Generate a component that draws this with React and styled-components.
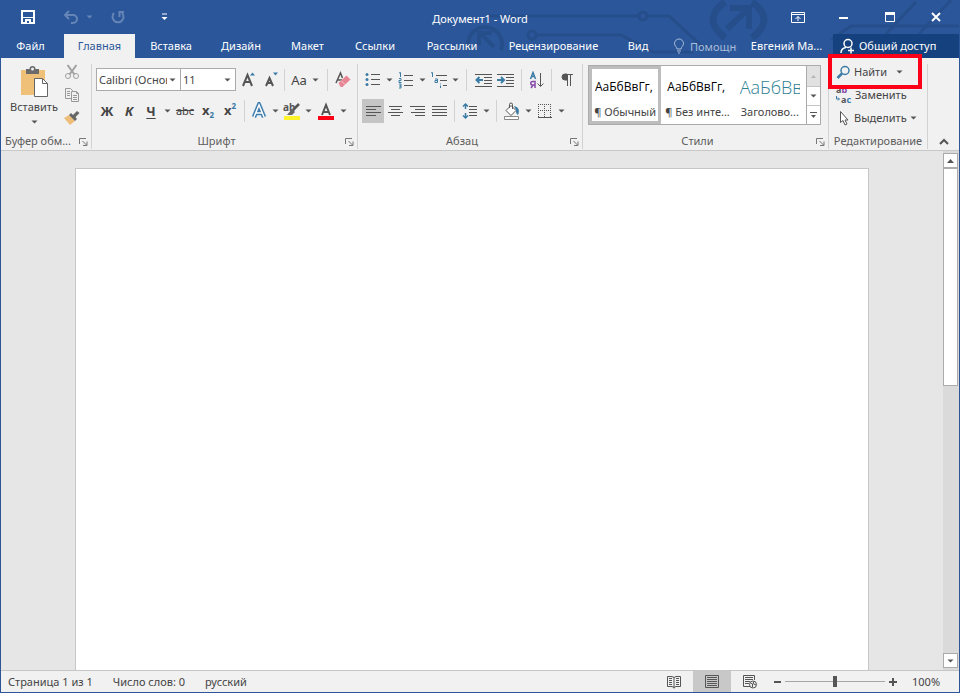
import React from "react";
import styled, { createGlobalStyle } from "styled-components";

const ink = "#444444";
const blue = "#2b579a";
const line = "#c8c8c8";
const accent = "#3a7ca5";
const font = '"Noto Sans", "Open Sans", sans-serif';

const GlobalStyle = createGlobalStyle`
  *, *::before, *::after { box-sizing: border-box; }
  body { margin: 0; font: 11px/16px ${font}; color: ${ink}; }
  button, input, select, textarea { font: inherit; color: inherit; margin: 0; }
  button { background: none; border: 0; padding: 0; cursor: default; white-space: nowrap; }
  svg { display: block; flex: none; }
`;

const Window = styled.div`
  min-height: 100vh;
  display: flex;
  flex-direction: column;
  border: 1px solid ${blue};
  border-top: 0;
  background: #e6e6e6;
`;

/* ---------- header ---------- */
const Header = styled.header`
  position: relative;
  background: ${blue};
  color: #fff;
`;
const Circuit = styled.svg`
  position: absolute;
  top: 0;
  right: 0;
  fill: none;
  stroke: #254e8b;
  stroke-width: 3;
`;
const TitleBar = styled.div`
  position: relative;
  display: grid;
  grid-template-columns: 1fr auto 1fr;
  height: 34px;
  align-items: center;
`;
const QuickAccess = styled.div`
  display: flex;
  align-items: center;
  padding-left: 16px;
`;
const QuickButton = styled.button`
  width: ${(p) => p.$w || 22}px;
  height: 30px;
  display: grid;
  place-items: center;
  margin-right: ${(p) => p.$after || 0}px;
`;
const Title = styled.h1`
  margin: 0;
  padding-top: 4px;
  font-size: 11px;
  line-height: 16px;
  font-weight: 400;
`;
const WindowButtons = styled.div`
  display: flex;
  justify-content: flex-end;
`;
const WindowButton = styled.button`
  width: 46px;
  height: 32px;
  display: grid;
  place-items: center;
`;
const TabBar = styled.nav`
  position: relative;
  display: flex;
  height: 24px;
`;
const Tab = styled.button`
  width: ${(p) => p.$w}px;
  margin-right: ${(p) => p.$after || 0}px;
  text-align: center;
  background: ${(p) => (p.$active ? "#f1f1f1" : "none")};
  color: ${(p) => (p.$active ? blue : "#fff")};
`;
const TellMe = styled.label`
  display: flex;
  align-items: center;
  gap: 5px;
  width: 64px;
  margin-left: 10px;
  color: #a9bcd9;
`;
const TellMeInput = styled.input`
  flex: 1;
  min-width: 0;
  height: 20px;
  padding: 0;
  border: 0;
  background: none;
  &::placeholder { color: #a9bcd9; opacity: 1; }
`;
const Account = styled.button`
  width: 77px;
  margin: 0 8px 0 auto;
  overflow: hidden;
`;
const Share = styled.button`
  width: 126px;
  display: flex;
  align-items: center;
  gap: 4px;
  padding-left: 7px;
  background: #15417e;
`;

/* ---------- ribbon ---------- */
const Ribbon = styled.div`
  display: flex;
  height: 93px;
  padding: 6px 0 1px;
  background: #f1f1f1;
  border-bottom: 1px solid ${line};
`;
const Group = styled.section`
  width: ${(p) => p.$w}px;
  flex: ${(p) => (p.$grow ? "1 0 auto" : "none")};
  display: flex;
  flex-direction: column;
  justify-content: space-between;
  border-right: 1px solid #d2d2d2;
`;
const GroupBody = styled.div`
  padding: ${(p) => p.$pad || "0 0 0 4px"};
`;
const GroupFoot = styled.div`
  display: flex;
  align-items: center;
  height: 16px;
  color: #5c5c5c;
`;
const GroupName = styled.h2`
  flex: 1;
  min-width: 0;
  margin: 0;
  font-size: 11px;
  line-height: 16px;
  font-weight: 400;
  text-align: center;
  white-space: nowrap;
`;
const Launcher = styled.button`
  width: 16px;
  height: 16px;
  display: grid;
  place-items: center;
`;
const ToolRow = styled.div`
  display: flex;
  align-items: center;
  height: 31px;
`;
const Tool = styled.button`
  width: ${(p) => p.$w || 22}px;
  height: ${(p) => p.$h || 24}px;
  display: flex;
  align-items: center;
  justify-content: center;
  gap: 5px;
  background: ${(p) => (p.$on ? "#c5c5c5" : "none")};
`;
const Rule = styled.span`
  width: 1px;
  height: 22px;
  margin: 0 ${(p) => p.$m || 4}px;
  background: #d2d2d2;
`;
const Letter = styled.span`
  font-size: ${(p) => p.$size || 13}px;
  font-weight: ${(p) => (p.$bold ? 700 : 400)};
  font-style: ${(p) => (p.$italic ? "italic" : "normal")};
  text-decoration: ${(p) => p.$deco || "none"};
  text-underline-offset: 2px;
`;
const Mark = styled.span`
  font-size: 8px;
  line-height: 8px;
  font-weight: 700;
  color: ${accent};
  align-self: ${(p) => (p.$up ? "flex-start" : "flex-end")};
`;
const Script = styled.span`
  display: flex;
  height: 17px;
  line-height: 16px;
  font-weight: 700;
  font-size: 13px;
`;
const Combo = styled.span`
  display: grid;
  grid-template-columns: 1fr 11px;
  align-items: center;
  width: ${(p) => p.$w}px;
  height: 23px;
  margin-right: ${(p) => p.$after || 0}px;
  background: #fff;
  border: 1px solid #ababab;
  border-left-width: ${(p) => (p.$joined ? 0 : 1)}px;
`;
const ComboSelect = styled.select`
  grid-area: 1 / 1 / 2 / 3;
  width: 100%;
  height: 21px;
  padding: 0 13px 0 2px;
  appearance: none;
  border: 0;
  background: none;
  overflow: hidden;
  text-overflow: clip;
`;
const ComboCaret = styled.span`
  grid-area: 1 / 2;
  pointer-events: none;
`;
const Clipboard = styled.div`
  display: flex;
`;
const Paste = styled.button`
  width: 58px;
  display: flex;
  flex-direction: column;
  align-items: center;
  padding-top: 2px;
`;
const PasteName = styled.span`
  margin-bottom: 4px;
  line-height: 18px;
`;
const ClipTools = styled.div`
  display: flex;
  flex-direction: column;
  gap: 7px;
  padding-left: 2px;
`;
const Gallery = styled.div`
  display: flex;
  height: 60px;
  margin-right: 7px;
  border: 1px solid #ababab;
  background: #fff;
`;
const StyleCard = styled.button`
  flex: 1;
  min-width: 0;
  display: flex;
  flex-direction: column;
  justify-content: space-between;
  padding: ${(p) => (p.$on ? "6px 1px 1px" : "9px 4px 4px")};
  border: ${(p) => (p.$on ? "3px solid #bdbdbd" : "0 solid")};
  overflow: hidden;
`;
const Sample = styled.span`
  width: 60px;
  margin-left: 2px;
  overflow: hidden;
  text-align: left;
  font-family: "Open Sans", sans-serif;
  font-size: ${(p) => (p.$heading ? 18 : 12)}px;
  font-weight: ${(p) => (p.$heading ? 300 : 400)};
  line-height: 24px;
  color: ${(p) => (p.$heading ? "#2e7f95" : "#000")};
`;
const StyleName = styled.span`
  align-self: center;
  line-height: 17px;
`;
const GalleryScroll = styled.div`
  width: 14px;
  display: grid;
  grid-template-rows: 20px 19px 1fr;
  border-left: 1px solid #ababab;
`;
const GalleryButton = styled.button`
  display: grid;
  place-items: center;
  background: ${(p) => (p.$off ? "#e1e1e1" : "#fff")};
  & + & { border-top: 1px solid #c6c6c6; }
`;
const EditList = styled.div`
  position: relative;
  display: flex;
  flex-direction: column;
  gap: 7px;
`;
const EditButton = styled.button`
  height: 16px;
  display: flex;
  align-items: center;
  gap: 3px;
  padding-left: 7px;
`;
const EditCaret = styled.span`
  margin-left: ${(p) => p.$m || 0}px;
`;
const Highlight = styled.div`
  position: absolute;
  z-index: 2;
  left: -1px;
  top: -10px;
  width: 94px;
  height: 35px;
  border: 4px solid #fb0016;
  pointer-events: none;
`;
const Collapse = styled.button`
  width: 31px;
  align-self: flex-end;
  height: 16px;
  display: grid;
  place-items: center;
`;

/* ---------- document ---------- */
const Workspace = styled.main`
  flex: 1;
  display: flex;
`;
const Desk = styled.div`
  flex: 1;
  display: flex;
  justify-content: center;
  padding: 17px 20px 0;
`;
const Sheet = styled.textarea`
  width: 100%;
  max-width: 794px;
  padding: 96px;
  border: 1px solid #c6c6c6;
  border-bottom: 0;
  outline: 0;
  resize: none;
  background: #fff;
`;
const ScrollBar = styled.div`
  width: 16px;
  display: flex;
  flex-direction: column;
  padding: 2px 1px 2px 0;
  background: #dadada;
`;
const ScrollButton = styled.button`
  height: 15px;
  display: grid;
  place-items: center;
  background: #fff;
  border: 1px solid #ababab;
`;
const ScrollTrack = styled.div`
  flex: 1;
`;
const ScrollThumb = styled.div`
  height: 45%;
  background: #fff;
  border: 1px solid #ababab;
`;

/* ---------- status bar ---------- */
const StatusBar = styled.footer`
  display: flex;
  align-items: center;
  height: 22px;
  padding-left: 7px;
  background: #f1f1f1;
  border-top: 1px solid #c6c6c6;
`;
const StatusButton = styled.button`
  margin-right: 20px;
`;
const ViewTools = styled.div`
  display: flex;
  align-items: center;
  margin-left: auto;
`;
const ViewButton = styled.button`
  width: 38px;
  height: 21px;
  display: grid;
  place-items: center;
  background: ${(p) => (p.$on ? "#c8c8c8" : "none")};
`;
const ZoomButton = styled.button`
  width: 16px;
  height: 20px;
  display: grid;
  place-items: center;
`;
const ZoomSlider = styled.input`
  width: 100px;
  height: 20px;
  appearance: none;
  background: none;
  &::-webkit-slider-runnable-track { height: 1px; background: #a6a6a6; }
  &::-webkit-slider-thumb {
    appearance: none;
    width: 4px;
    height: 11px;
    margin-top: -5px;
    background: #555;
  }
`;
const ZoomValue = styled.button`
  width: 58px;
  padding-left: 11px;
  text-align: left;
`;

/* ---------- drawings ---------- */
const Caret = ({ c = "#555" }) => (
  <svg width="7" height="4" viewBox="0 0 7 4"><path d="M0.500 0.500h6L3.500 3.500z" fill={c} /></svg>
);
const Drop = ({ label, w = 11 }) => (
  <Tool $w={w} aria-label={label}><Caret /></Tool>
);
const Icon = ({ w = 18, h = 18, children, s = "#555" }) => (
  <svg width={w} height={h} viewBox={`0 0 ${w} ${h}`} fill="none" stroke={s} aria-hidden="true">{children}</svg>
);
const CornerIcon = () => (
  <Icon w={9} h={9} s="#777"><path d="M0.500 7V1.500H7M3.500 4l4 4M8 4.500v4H4" /></Icon>
);
const bars = (rows) => rows.map(([x, y, w]) => <path key={y} d={`M${x} ${y}.500h${w}`} />);
const PasteIcon = () => (
  <Icon w={30} h={32}>
    <path d="M2 4h24v25H2z" fill="#efc078" stroke="none" />
    <path d="M7 3h3.500a3 3 0 0 1 6 0H20v5H7z" fill="#6b6b6b" stroke="none" />
    <circle cx="13.500" cy="3" r="1.500" fill="#f1f1f1" stroke="none" />
    <path d="M15.500 12.500h8l5 5v13h-13z" fill="#fff" stroke="#666" />
    <path d="M23.500 12.500v5h5" stroke="#666" />
  </Icon>
);
const CutIcon = () => (
  <Icon w={16} h={16} s="#a0a0a0">
    <circle cx="4" cy="12" r="2.500" /><circle cx="12" cy="12" r="2.500" />
    <path d="M3.500 1l7 9.500M12.500 1l-7 9.500" strokeWidth="2" />
  </Icon>
);
const CopyIcon = () => (
  <Icon w={16} h={16} s="#999">
    <path d="M1.500 1.500h5l2 2v8h-7z" /><path d="M7.500 4.500h5l2 2v8h-7z" fill="#f1f1f1" />
    <path d="M12.500 4.500v2h2M3 4.500h3M3 6.500h3M3 8.500h3M9 8.500h4M9 10.500h4M9 12.500h4" />
  </Icon>
);
const BrushIcon = () => (
  <Icon w={16} h={16}>
    <path d="M0 8l5-3 6 6-5 4z" fill="#efbd7a" stroke="none" />
    <path d="M5 5l6 6 2-2-1.500-2L15.500 3l-2.500-2-4 4-2-2z" fill="#666" stroke="none" />
  </Icon>
);
const EraserIcon = () => (
  <Icon>
    <path d="M2 12L6.500 2l2 5M3.500 9H8" strokeWidth="1.500" />
    <path d="M4.500 12l8-7.500 4 4-8 7.500H6.500z" fill="#e88594" stroke="none" />
    <path d="M7 9.500l4 4" stroke="#f6c6cd" />
  </Icon>
);
const BulletIcon = () => (
  <Icon w={16} h={16}>
    {bars([[6, 2, 9], [6, 7, 9], [6, 12, 9]])}
    <g fill={accent} stroke="none"><circle cx="2" cy="2.500" r="1.500" /><circle cx="2" cy="7.500" r="1.500" /><circle cx="2" cy="12.500" r="1.500" /></g>
  </Icon>
);
const NumberIcon = () => (
  <Icon w={16} h={18}>
    {bars([[6, 4, 9], [6, 9, 9], [6, 14, 9]])}
    <path d="M1 2l1.500-.5V6M1 7.500h2v2H1v2h2.500M1 13h2v2H1.500H3v2H1" stroke={accent} />
  </Icon>
);
const LevelIcon = () => (
  <Icon w={18} h={18}>
    {bars([[6, 4, 11], [10, 9, 7], [13, 14, 4]])}
    <path d="M1 2l1.500-.5V6M5 8h2.500v3.500H5v-2h2.500M10.500 12.500v.8M10.500 14.500V17" stroke={accent} />
  </Icon>
);
const DentIcon = ({ out }) => (
  <Icon w={17} h={14}>
    {bars([[0, 1, 17], [9, 4, 8], [9, 7, 8], [9, 10, 8], [0, 13, 17]])}
    <path d={out ? "M8 7H1.500M4.500 4l-3 3 3 3" : "M0 7h6.500M4 4l3 3-3 3"} stroke={accent} strokeWidth="2" />
  </Icon>
);
const SortIcon = () => (
  <Icon w={16} h={18}>
    <path d="M1.500 8L4 1.500 6.500 8M2.500 5.500h3" stroke={accent} strokeWidth="1.500" />
    <path d="M6 17v-6.500H3.500a1.500 1.500 0 0 0 0 3.500H6M4 14l-2 3" stroke="#8549a8" strokeWidth="1.500" />
    <path d="M11.500 2v13M8.500 12.500l3 3 3-3" />
  </Icon>
);
const PilcrowIcon = () => (
  <Icon w={12} h={14}>
    <path d="M6 1H4a3 3 0 0 0 0 6h2z" fill="#555" /><path d="M6.500 1v12M9.500 1v12M5 1.500h7" />
  </Icon>
);
const alignRows = {
  left: [[0, 1, 15], [0, 4, 10], [0, 7, 15], [0, 10, 10]],
  center: [[1, 1, 13], [3, 4, 9], [0, 7, 15], [3, 10, 9]],
  right: [[0, 1, 15], [5, 4, 10], [1, 7, 14], [5, 10, 10]],
  full: [[0, 1, 15], [0, 4, 15], [0, 7, 15], [0, 10, 15]],
};
const AlignIcon = ({ kind }) => <Icon w={15} h={12}>{bars(alignRows[kind])}</Icon>;
const SpacingIcon = () => (
  <Icon w={16} h={18}>
    {bars([[7, 4, 8], [7, 7, 8], [7, 10, 8], [7, 13, 8]])}
    <path d="M3.500 2v5M1 4.500L3.500 2 6 4.500M3.500 11v5M1 13.500L3.500 16 6 13.500" stroke={accent} strokeWidth="1.500" />
  </Icon>
);
const FillIcon = () => (
  <Icon w={18} h={18}>
    <path d="M3 8.500L8 3.500l5 5-5 5z" fill="#fff" /><path d="M6.500 6V2.500a1.500 1.500 0 0 1 3 0V7" />
    <path d="M11 4c5 1 6 5 4 9-2-1-2-3-2-5z" fill={accent} stroke="none" />
    <path d="M1.500 14.500h14v3h-14z" fill="#fff" stroke="#888" />
  </Icon>
);
const BorderIcon = () => (
  <Icon w={14} h={14}>
    <path d="M0 0.500h14M0 6.500h14M0.500 0v13M6.500 0v13M12.500 0v13" strokeDasharray="1 1" />
    <path d="M0 13.500h14" />
  </Icon>
);
const EffectIcon = () => (
  <Icon>
    <path d="M4 15L9 3l5 12M6 11h6" stroke="#9cc4e2" strokeWidth="5" />
    <path d="M4 15L9 3l5 12M6 11h6" stroke="#3d79a7" strokeWidth="4" />
    <path d="M4 15L9 3l5 12M6 11h6" stroke="#fff" strokeWidth="1.500" />
  </Icon>
);
const Tiny = styled.text`
  font-family: ${font};
  font-size: ${(p) => p.$size || 10}px;
  font-weight: 700;
  stroke: none;
  fill: #555;
`;
const Tint = styled.tspan`
  fill: ${(p) => p.$c};
`;
const MarkerIcon = () => (
  <Icon w={18} h={20}>
    <path d="M1 15h16v4H1z" fill="#fff32b" stroke="none" />
    <Tiny x="0" y="10">ab</Tiny>
    <path d="M16 3l-6 6" strokeWidth="2.500" /><path d="M9 8l3 3-3 3H4z" fill="#666" stroke="none" />
  </Icon>
);
const ColorIcon = () => (
  <Icon w={18} h={20}>
    <path d="M1 15h16v4H1z" fill="#fb0016" stroke="none" />
    <path d="M5 14L9 4l4 10M6.500 11h5" strokeWidth="2" />
  </Icon>
);
const SizeIcon = ({ up }) => (
  <Icon w={18} h={20}>
    <path d={up ? "M3 16L7.500 5 12 16M4.500 12h6" : "M4 16L7.500 8 11 16M5 13h5"} strokeWidth="2" />
    <path d={up ? "M10 5.500h5L12.500 2.500z" : "M11 2.500h5L13.500 5.500z"} fill={accent} stroke="none" />
  </Icon>
);
const SearchIcon = () => (
  <Icon w={15} h={15} s={accent}><circle cx="9" cy="5.500" r="4" strokeWidth="1.500" /><path d="M6 8.500L1.500 13" strokeWidth="2.500" /></Icon>
);
const ReplaceIcon = () => (
  <Icon w={16} h={20}>
    <Tiny x="0" y="8" $size={9}>a<Tint $c="#8549a8">b</Tint></Tiny>
    <Tiny x="5" y="18" $size={9}>a<Tint $c={accent}>c</Tint></Tiny>
    <path d="M0.500 11v3H3M2 12.500L3.500 14 2 15.500" stroke={accent} />
  </Icon>
);
const PointerIcon = () => (
  <Icon w={15} h={16}><path d="M4.500 1.500v11l2.500-2 2 4.500 2-1-2-4h3z" fill="#fff" /></Icon>
);

const tabs = [["Файл", 59, 4], ["Главная", 71], ["Вставка", 72], ["Дизайн", 68], ["Макет", 65], ["Ссылки", 70], ["Рассылки", 84], ["Рецензирование", 119], ["Вид", 50]];

const GroupFooter = ({ name, launch = true }) => (
  <GroupFoot>
    <GroupName>{name}</GroupName>
    {launch && <Launcher aria-label={`${name}: параметры`}><CornerIcon /></Launcher>}
  </GroupFoot>
);

export default function App() {
  return (
    <Window>
      <GlobalStyle />
      <Header>
        <Circuit width="520" height="58" viewBox="0 0 520 58" aria-hidden="true">
          <path d="M50 16h150M208 16h22l34 31h12M98 35h84l32 17h40" />
          <circle cx="204" cy="16" r="4" /><circle cx="93" cy="35" r="4" />
          <path d="M30 50a17 17 0 1 1 32 0M55 47L41 33M40 45V33h13" strokeWidth="4" />
          <path d="M286 2q-24 17 0 36M313 2q24 17 0 36" strokeWidth="7" />
          <path d="M288 29l21-20M291 8h19v21" strokeWidth="6" />
          <path d="M392 40l20-14h108M447 34l30-32M480 34l32-34" />
        </Circuit>
        <TitleBar>
          <QuickAccess>
            <QuickButton aria-label="Сохранить" $after={21}>
              <Icon w={14} h={14} s="#fff"><path d="M1 1h12v12H1z" strokeWidth="2" /><path d="M2 7.500h10" /><path d="M4 9h6v4H4z" fill="#fff" stroke="none" /><path d="M6 11h2v2H6z" fill={blue} stroke="none" /></Icon>
            </QuickButton>
            <QuickButton aria-label="Отменить">
              <Icon w={16} h={14} s="#6685b7"><path d="M2 5h8a4 4 0 0 1 0 8H8M6 1L2 5l4 4" strokeWidth="2" /></Icon>
            </QuickButton>
            <QuickButton aria-label="Список отмены" $w={14} $after={11}><Caret c="#6685b7" /></QuickButton>
            <QuickButton aria-label="Повторить" $after={24}>
              <Icon w={14} h={14} s="#6685b7"><path d="M3 3a5.500 5.500 0 1 0 8 0M8.500 7V2H13" strokeWidth="2" /></Icon>
            </QuickButton>
            <QuickButton aria-label="Настройка панели">
              <Icon w={7} h={8} s="#fff"><path d="M1 1h5" /><path d="M0.500 4h6L3.500 7z" fill="#fff" stroke="none" /></Icon>
            </QuickButton>
          </QuickAccess>
          <Title>Документ1 - Word</Title>
          <WindowButtons>
            <WindowButton aria-label="Параметры ленты">
              <Icon w={14} h={11} s="#fff"><path d="M.5.5h13v10H.5zM1 2.500h12M7 9V4.500M4.500 7L7 4.500 9.500 7" /></Icon>
            </WindowButton>
            <WindowButton aria-label="Свернуть"><Icon w={10} h={6} s="#fff"><path d="M0 4h9" strokeWidth="2" /></Icon></WindowButton>
            <WindowButton aria-label="Развернуть"><Icon w={10} h={10} s="#fff"><path d="M.5.5h9v9h-9z" /><path d="M0 1.500h10" strokeWidth="3" /></Icon></WindowButton>
            <WindowButton aria-label="Закрыть"><Icon w={10} h={10} s="#fff"><path d="M1 1l8 8M9 1L1 9" strokeWidth="2" /></Icon></WindowButton>
          </WindowButtons>
        </TitleBar>
        <TabBar>
          {tabs.map(([t, w, after]) => <Tab key={t} $w={w} $after={after} $active={t === "Главная"}>{t}</Tab>)}
          <TellMe>
            <Icon w={12} h={16} s="#a9bcd9"><path d="M4 11c0-2-2.500-3-2.500-5.500a4.500 4.500 0 0 1 9 0C10.500 8 8 9 8 11zM4 13h4M5 15h2" /></Icon>
            <TellMeInput aria-label="Помощник" placeholder="Помощник" />
          </TellMe>
          <Account>Евгений Ма...</Account>
          <Share>
            <Icon w={15} h={16} s="#fff"><circle cx="8" cy="5.500" r="4" strokeWidth="1.500" /><path d="M1 15c0-3 2-5 5-5.500M8 12.500h6M11 9.500v6" strokeWidth="1.500" /></Icon>
            Общий доступ
          </Share>
        </TabBar>
      </Header>

      <Ribbon>
        <Group $w={91}>
          <GroupBody>
            <Clipboard>
              <Paste><PasteIcon /><PasteName>Вставить</PasteName><Caret /></Paste>
              <ClipTools>
                <Tool aria-label="Вырезать" $w={14} $h={16}><CutIcon /></Tool>
                <Tool aria-label="Копировать" $w={14} $h={16}><CopyIcon /></Tool>
                <Tool aria-label="Формат по образцу" $w={14} $h={16}><BrushIcon /></Tool>
              </ClipTools>
            </Clipboard>
          </GroupBody>
          <GroupFooter name="Буфер обм..." />
        </Group>

        <Group $w={266}>
          <GroupBody>
            <ToolRow>
              <Combo $w={85}>
                <ComboSelect aria-label="Шрифт"><option>Calibri (Основной текст)</option></ComboSelect>
                <ComboCaret><Caret /></ComboCaret>
              </Combo>
              <Combo $w={55} $joined $after={2}>
                <ComboSelect aria-label="Размер шрифта"><option>11</option></ComboSelect>
                <ComboCaret><Caret /></ComboCaret>
              </Combo>
              <Tool aria-label="Увеличить размер"><SizeIcon up /></Tool>
              <Tool aria-label="Уменьшить размер"><SizeIcon /></Tool>
              <Rule $m={2} />
              <Tool $w={36} aria-label="Регистр"><Letter>Aa</Letter><Caret /></Tool>
              <Rule />
              <Tool aria-label="Очистить формат"><EraserIcon /></Tool>
            </ToolRow>
            <ToolRow>
              <Tool><Letter $bold>Ж</Letter></Tool>
              <Tool><Letter $bold $italic>К</Letter></Tool>
              <Tool><Letter $bold $deco="underline">Ч</Letter></Tool>
              <Drop label="Вид подчёркивания" />
              <Tool $w={24}><Letter $size={11} $deco="line-through">abc</Letter></Tool>
              <Tool><Script>x<Mark>2</Mark></Script></Tool>
              <Tool><Script>x<Mark $up>2</Mark></Script></Tool>
              <Rule $m={3} />
              <Tool aria-label="Эффекты"><EffectIcon /></Tool><Drop label="Список эффектов" />
              <Tool aria-label="Выделение цветом"><MarkerIcon /></Tool><Drop label="Цвет выделения" />
              <Tool aria-label="Цвет текста" $w={24}><ColorIcon /></Tool><Drop label="Список цветов" />
            </ToolRow>
          </GroupBody>
          <GroupFooter name="Шрифт" />
        </Group>

        <Group $w={225}>
          <GroupBody>
            <ToolRow>
              <Tool aria-label="Маркеры"><BulletIcon /></Tool><Drop label="Список маркеров" />
              <Tool aria-label="Нумерация"><NumberIcon /></Tool><Drop label="Список нумерации" />
              <Tool aria-label="Многоуровневый список"><LevelIcon /></Tool><Drop label="Виды списка" />
              <Rule $m={5} />
              <Tool aria-label="Уменьшить отступ"><DentIcon out /></Tool>
              <Tool aria-label="Увеличить отступ"><DentIcon /></Tool>
              <Rule $m={5} />
              <Tool $w={20} aria-label="Сортировка"><SortIcon /></Tool>
              <Rule />
              <Tool aria-label="Все знаки"><PilcrowIcon /></Tool>
            </ToolRow>
            <ToolRow>
              <Tool $on aria-label="По левому краю"><AlignIcon kind="left" /></Tool>
              <Tool aria-label="По центру"><AlignIcon kind="center" /></Tool>
              <Tool aria-label="По правому краю"><AlignIcon kind="right" /></Tool>
              <Tool aria-label="По ширине"><AlignIcon kind="full" /></Tool>
              <Rule />
              <Tool aria-label="Интервал"><SpacingIcon /></Tool><Drop label="Список интервалов" />
              <Rule />
              <Tool aria-label="Заливка"><FillIcon /></Tool><Drop label="Цвет заливки" />
              <Tool aria-label="Границы"><BorderIcon /></Tool><Drop label="Список границ" />
            </ToolRow>
          </GroupBody>
          <GroupFooter name="Абзац" />
        </Group>

        <Group $w={246} $grow>
          <GroupBody $pad="1px 0 0 5px">
            <Gallery>
              <StyleCard $on><Sample>АаБбВвГг,</Sample><StyleName>¶ Обычный</StyleName></StyleCard>
              <StyleCard><Sample>АаБбВвГг,</Sample><StyleName>¶ Без инте...</StyleName></StyleCard>
              <StyleCard><Sample $heading>АаБбВвГг</Sample><StyleName>Заголово...</StyleName></StyleCard>
              <GalleryScroll>
                <GalleryButton $off aria-label="Вверх"><Icon w={5} h={3}><path d="M0 3h5L2.500 0z" fill="#b5b5b5" stroke="none" /></Icon></GalleryButton>
                <GalleryButton aria-label="Вниз"><Caret /></GalleryButton>
                <GalleryButton aria-label="Все стили"><Icon w={7} h={7}><path d="M0 .5h7" /><path d="M1 3h5L3.500 6z" fill="#555" stroke="none" /></Icon></GalleryButton>
              </GalleryScroll>
            </Gallery>
          </GroupBody>
          <GroupFooter name="Стили" />
        </Group>

        <Group $w={99}>
          <EditList>
            <Highlight />
            <EditButton><SearchIcon />Найти<EditCaret $m={6}><Caret /></EditCaret></EditButton>
            <EditButton><ReplaceIcon />Заменить</EditButton>
            <EditButton><PointerIcon />Выделить<Caret /></EditButton>
          </EditList>
          <GroupFooter name="Редактирование" launch={false} />
        </Group>
        <Collapse aria-label="Свернуть ленту"><Icon w={10} h={7}><path d="M1 6l4-4 4 4" strokeWidth="2" /></Icon></Collapse>
      </Ribbon>

      <Workspace>
        <Desk><Sheet aria-label="Текст документа" /></Desk>
        <ScrollBar>
          <ScrollButton aria-label="Прокрутить вверх"><Icon w={7} h={4}><path d="M0 4h7L3.500 0z" fill="#555" stroke="none" /></Icon></ScrollButton>
          <ScrollTrack><ScrollThumb /></ScrollTrack>
          <ScrollButton aria-label="Прокрутить вниз"><Caret /></ScrollButton>
        </ScrollBar>
      </Workspace>

      <StatusBar>
        <StatusButton>Страница 1 из 1</StatusButton>
        <StatusButton>Число слов: 0</StatusButton>
        <StatusButton>русский</StatusButton>
        <ViewTools>
          <ViewButton aria-label="Режим чтения">
            <Icon w={14} h={14}><path d="M.5 1.500H5l2 1 2-1h4.500v10H9l-2 1-2-1H.5zM7 2.500v11M2 3.500h3M2 5.500h3M2 7.500h3M2 9.500h3M9 3.500h3M9 5.500h3M9 7.500h3M9 9.500h3" /></Icon>
          </ViewButton>
          <ViewButton $on aria-label="Разметка страницы">
            <Icon w={14} h={13}><path d="M.5.5h13v12H.5zM2 2.500h10M2 4.500h10M2 6.500h10M2 8.500h10M2 10.500h10" /></Icon>
          </ViewButton>
          <ViewButton aria-label="Веб-документ">
            <Icon w={14} h={14}><path d="M7 11.500H.5V.5h11V5M2 2.500h8M2 4.500h8M2 6.500h5M2 8.500h4" /><circle cx="10" cy="9.500" r="3.500" fill="#eee" /><path d="M7.500 8l2 1v3M11 6.500l-1 2 3 1.500" /></Icon>
          </ViewButton>
          <ZoomButton aria-label="Уменьшить масштаб"><Icon w={7} h={2}><path d="M0 1h7" strokeWidth="2" /></Icon></ZoomButton>
          <ZoomSlider type="range" min="0" max="100" defaultValue="50" aria-label="Масштаб" />
          <ZoomButton aria-label="Увеличить масштаб"><Icon w={8} h={8}><path d="M0 4h8M4 0v8" strokeWidth="2" /></Icon></ZoomButton>
          <ZoomValue>100%</ZoomValue>
        </ViewTools>
      </StatusBar>
    </Window>
  );
}
